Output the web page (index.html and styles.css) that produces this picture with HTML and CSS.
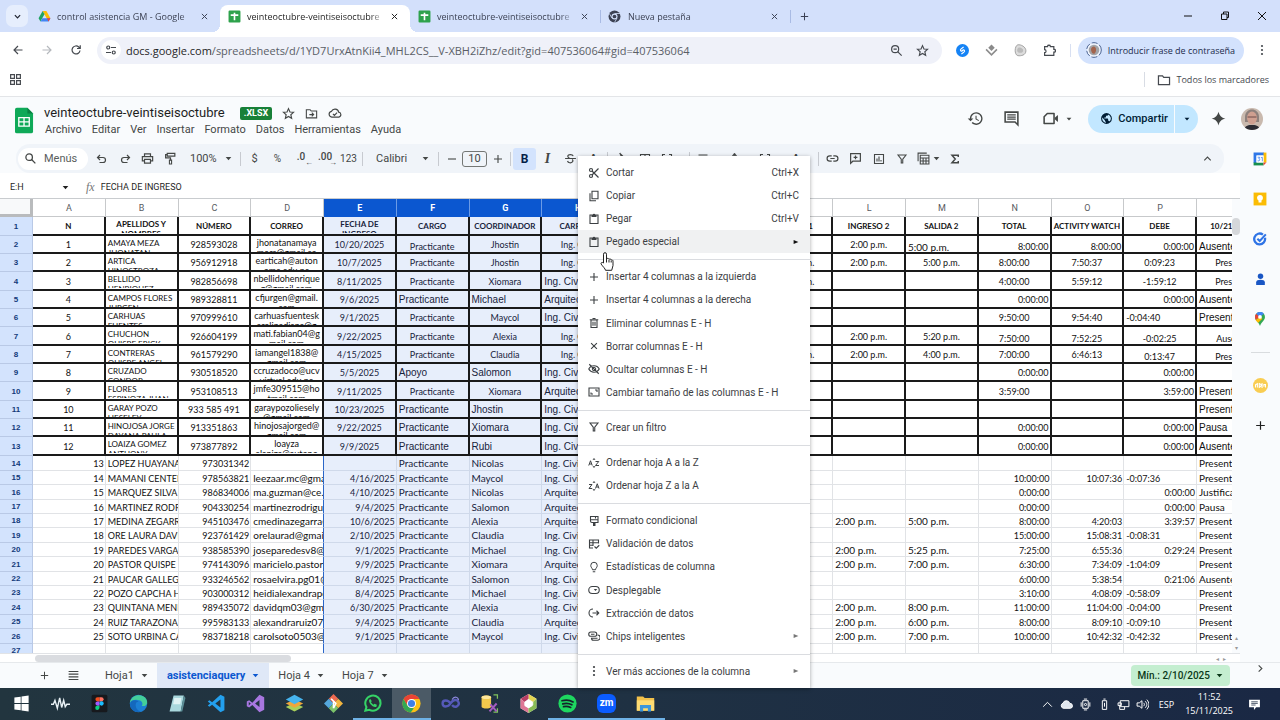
FILE: index.html
```html
<!DOCTYPE html>
<html lang="es">
<head>
<meta charset="utf-8">
<title>veinteoctubre-veintiseisoctubre</title>
<link rel="stylesheet" href="styles.css">
</head>
<body>
<svg class="sprite" aria-hidden="true">
  <symbol id="i-x" viewBox="0 0 24 24"><path d="M5 5l14 14M19 5L5 19" fill="none" stroke="currentColor" stroke-width="2.6"/></symbol>
  <symbol id="i-plus" viewBox="0 0 24 24"><path d="M12 4v16M4 12h16" fill="none" stroke="currentColor" stroke-width="2.2"/></symbol>
  <symbol id="i-minus" viewBox="0 0 24 24"><path d="M4 12h16" fill="none" stroke="currentColor" stroke-width="2.2"/></symbol>
  <symbol id="i-caret" viewBox="0 0 10 10"><path d="M1 3h8L5 7.500z"/></symbol>
  <symbol id="i-play" viewBox="0 0 10 10"><path d="M1 1.500v7L9 5z"/></symbol>
  <symbol id="i-chev" viewBox="0 0 24 24"><path d="M5 8.500l7 7 7-7" fill="none" stroke="currentColor" stroke-width="3.200"/></symbol>
  <symbol id="i-up" viewBox="0 0 24 24"><path d="M5 16l7-7 7 7" fill="none" stroke="currentColor" stroke-width="2.400"/></symbol>
  <symbol id="i-right" viewBox="0 0 24 24"><path d="M8 5l7 7-7 7" fill="none" stroke="currentColor" stroke-width="2.400"/></symbol>
  <symbol id="i-back" viewBox="0 0 24 24"><path d="M21 12H4M12 4l-8 8 8 8" fill="none" stroke="currentColor" stroke-width="2.300"/></symbol>
  <symbol id="i-fwd" viewBox="0 0 24 24"><path d="M3 12h17M12 4l8 8-8 8" fill="none" stroke="currentColor" stroke-width="2.300"/></symbol>
  <symbol id="i-reload" viewBox="0 0 24 24"><path d="M20 13a8 8 0 1 1-2.500-7L20 8.500M20.500 2.500v6.500H14" fill="none" stroke="currentColor" stroke-width="2.400"/></symbol>
  <symbol id="i-tune" viewBox="0 0 24 24"><g fill="none" stroke="currentColor" stroke-width="2.400"><circle cx="6.500" cy="7" r="3"/><path d="M12 7h10M2 17h10"/><circle cx="17.500" cy="17" r="3"/></g></symbol>
  <symbol id="i-search" viewBox="0 0 24 24"><g fill="none" stroke="currentColor" stroke-width="2.400"><circle cx="9.500" cy="9.500" r="6"/><path d="M14 14l7 7"/></g></symbol>
  <symbol id="i-zoomout" viewBox="0 0 24 24"><g fill="none" stroke="currentColor" stroke-width="2.200"><circle cx="9.500" cy="9.500" r="6.500"/><path d="M14 14l7.500 7.500M6.500 9.500h6"/></g></symbol>
  <symbol id="i-star" viewBox="0 0 24 24"><path d="M12 3l2.700 6.200 6.600.6-5 4.500 1.500 6.600L12 17.400l-5.800 3.500 1.500-6.600-5-4.500 6.600-.6z" fill="none" stroke="currentColor" stroke-width="2.100"/></symbol>
  <symbol id="i-puzzle" viewBox="0 0 24 24"><path d="M3 5h5.500V3.500c0-2 5-2 5 0V5H20v5h1.500c2 0 2 5 0 5H20v6H3v-5c3.500 0 3.500-5.500 0-5.500z" fill="none" stroke="currentColor" stroke-width="2.200"/></symbol>
  <symbol id="i-dots" viewBox="0 0 24 24"><circle cx="12" cy="4" r="2.200"/><circle cx="12" cy="12" r="2.200"/><circle cx="12" cy="20" r="2.200"/></symbol>
  <symbol id="i-apps" viewBox="0 0 24 24"><path d="M3 3h7v7H3zM14 3h7v7h-7zM3 14h7v7H3zM14 14h7v7h-7z" fill="none" stroke="currentColor" stroke-width="2.200"/></symbol>
  <symbol id="i-folder" viewBox="0 0 24 24"><path d="M2.500 5h7l2 2.500h10V20h-19z" fill="none" stroke="currentColor" stroke-width="2.100"/></symbol>
  <symbol id="i-foldermove" viewBox="0 0 24 24"><path d="M2.500 5h7l2 2.500h10V20h-19zM8 14h7M12.500 10.500L16 14l-3.500 3.500" fill="none" stroke="currentColor" stroke-width="2"/></symbol>
  <symbol id="i-cloudok" viewBox="0 0 24 24"><path d="M6.500 19a5 5 0 0 1-.5-9.900A6.500 6.500 0 0 1 18.300 10.500 4.300 4.300 0 0 1 18.500 19zM8.500 13.500l2.500 2.500 4.500-4.500" fill="none" stroke="currentColor" stroke-width="2"/></symbol>
  <symbol id="i-sheetfav" viewBox="0 0 24 24"><rect x="1" y="1" width="22" height="22" rx="2" fill="#2ea24c"/><path d="M12 5v14M5 9.500h14" stroke="#fff" stroke-width="3"/></symbol>
  <symbol id="i-drive" viewBox="0 0 24 24"><path d="M8.500 2h7l7.500 13h-7z" fill="#fbbc04"/><path d="M8.500 2L1 15l3.500 6L12 8z" fill="#1ea362"/><path d="M8 15h15l-3.500 6h-15z" fill="#4285f4"/><path d="M19.500 15H23l-3.500 6-3-6z" fill="#ea4335"/></symbol>
  <symbol id="i-chromedark" viewBox="0 0 24 24"><circle cx="12" cy="12" r="11" fill="#3c4254"/><circle cx="12" cy="12" r="5.600" fill="#d3e0fb"/><circle cx="12" cy="12" r="3.400" fill="#3c4254"/><path d="M12 6.500h10M7.300 15L2.500 6.500M16.700 15L12 23" stroke="#d3e0fb" stroke-width="1.500"/></symbol>
  <symbol id="i-history" viewBox="0 0 24 24"><path d="M13 3a9 9 0 0 0-9 9H1l4 4 4-4H6a7 7 0 1 1 2 4.900l-1.400 1.500A9 9 0 1 0 13 3zm-1 5v5l4.300 2.500.7-1.200-3.500-2.100V8z"/></symbol>
  <symbol id="i-comments" viewBox="0 0 24 24"><path d="M3 3h18v18l-4-4H3z" fill="none" stroke="currentColor" stroke-width="2.200"/><path d="M6 7h12M6 10h12M6 13h12" stroke="currentColor" stroke-width="1.700"/></symbol>
  <symbol id="i-cam" viewBox="0 0 24 24"><path d="M7.500 5H17v14H3V9.500z" fill="none" stroke="currentColor" stroke-width="2.200" stroke-linejoin="round"/><path d="M18 11l4.500-4v10L18 13z"/></symbol>
  <symbol id="i-globe" viewBox="0 0 24 24"><path d="M12 2a10 10 0 1 0 0 20 10 10 0 0 0 0-20zm-1 17.900A8 8 0 0 1 4.200 10.200L9 15v1a2 2 0 0 0 2 2zm6.900-2.500A2 2 0 0 0 16 16h-1v-3a1 1 0 0 0-1-1H8v-2h2a1 1 0 0 0 1-1V7h2a2 2 0 0 0 2-2v-.4a8 8 0 0 1 2.900 12.800z"/></symbol>
  <symbol id="i-spark" viewBox="0 0 24 24"><path d="M12 1c1.500 6 4.500 9.500 11 11-6.500 1.500-9.500 5-11 11-1.500-6-4.500-9.500-11-11 6.500-1.500 9.500-5 11-11z"/></symbol>
  <symbol id="i-undo" viewBox="0 0 24 24"><path d="M8 4L3 9l5 5M3 9h11a5 5 0 0 1 0 10H7" fill="none" stroke="currentColor" stroke-width="2.400"/></symbol>
  <symbol id="i-redo" viewBox="0 0 24 24"><path d="M16 4l5 5-5 5M21 9H10a5 5 0 0 0 0 10h7" fill="none" stroke="currentColor" stroke-width="2.400"/></symbol>
  <symbol id="i-print" viewBox="0 0 24 24"><path d="M6.500 8V3.500h11V8M6.500 16.500H2.500V8.500h19v8h-4M6.500 13.500h11v7h-11z" fill="none" stroke="currentColor" stroke-width="2.200"/></symbol>
  <symbol id="i-paint" viewBox="0 0 24 24"><path d="M6 2.500h14v5H6zM6 5H3v6h9v4" fill="none" stroke="currentColor" stroke-width="2.200"/><path d="M10 15h4v7h-4z" fill="none" stroke="currentColor" stroke-width="2"/></symbol>
  <symbol id="i-strike" viewBox="0 0 24 24"><path d="M2 12h20M17 7.500C16 4 7 3.500 7 8c0 1.500 1 2.500 3 3.200M15 14c4 3-1 6.500-4.500 5.800C8 19.500 7 18 6.500 16.500" fill="none" stroke="currentColor" stroke-width="2.200"/></symbol>
  <symbol id="i-fill" viewBox="0 0 24 24"><path d="M8 2l10 10-6.500 6.500L5 12l6-6z" fill="none" stroke="currentColor" stroke-width="2.200"/></symbol>
  <symbol id="i-border" viewBox="0 0 24 24"><path d="M3 3h18v18H3zM12 3v18M3 12h18" fill="none" stroke="currentColor" stroke-width="2.200"/></symbol>
  <symbol id="i-merge" viewBox="0 0 24 24"><path d="M8 3H3v5M16 3h5v5M3 16v5h5M21 16v5h-5M3 12h6M15 12h6" fill="none" stroke="currentColor" stroke-width="2.200"/></symbol>
  <symbol id="i-align" viewBox="0 0 24 24"><path d="M3 4h18M6 9h12M3 14h18M6 19h12" stroke="currentColor" stroke-width="2.200"/></symbol>
  <symbol id="i-valign" viewBox="0 0 24 24"><path d="M12 2l-4 5h8zM12 7v4M3 12h18M12 22l-4-5h8z" stroke="currentColor"/></symbol>
  <symbol id="i-link" viewBox="0 0 24 24"><path d="M10.500 17H7A5 5 0 0 1 7 7h3.500M13.500 7H17a5 5 0 0 1 0 10h-3.500M8 12h8" fill="none" stroke="currentColor" stroke-width="2.200"/></symbol>
  <symbol id="i-addcom" viewBox="0 0 24 24"><path d="M3 3h18v14H7l-4 4zM12 6.500v7M8.500 10h7" fill="none" stroke="currentColor" stroke-width="2.200"/></symbol>
  <symbol id="i-chart" viewBox="0 0 24 24"><path d="M3 3h18v18H3zM8 17v-6M12 17V7M16 17v-3" fill="none" stroke="currentColor" stroke-width="2.200"/></symbol>
  <symbol id="i-filter" viewBox="0 0 24 24"><path d="M4 4h16l-6.500 8.500V20h-3v-7.500z" fill="none" stroke="currentColor" stroke-width="2.200"/></symbol>
  <symbol id="i-views" viewBox="0 0 24 24"><path d="M2 17V2h16M6 6h16v16H6zM6 11h16M6 16.500h16M11.300 11v11M16.600 11v11" fill="none" stroke="currentColor" stroke-width="2"/></symbol>
  <symbol id="i-sigma" viewBox="0 0 24 24"><path d="M18.500 8V4.500H6l6.500 7.500L6 19.500h12.500V16" fill="none" stroke="currentColor" stroke-width="3"/></symbol>
  <symbol id="i-cut" viewBox="0 0 24 24"><g fill="none" stroke="currentColor" stroke-width="2.400"><circle cx="6" cy="6" r="3"/><circle cx="6" cy="18" r="3"/><path d="M8 8l13 13M8 16L21 3"/></g></symbol>
  <symbol id="i-copy" viewBox="0 0 24 24"><path d="M8 2.500h12v15H8zM4 6.500v15h12" fill="none" stroke="currentColor" stroke-width="2.200"/></symbol>
  <symbol id="i-paste" viewBox="0 0 24 24"><path d="M4 4h16v17H4z" fill="none" stroke="currentColor" stroke-width="2.200"/><path d="M7 4h2.500a2.500 2.500 0 0 1 5 0H17v4H7z"/></symbol>
  <symbol id="i-trash" viewBox="0 0 24 24"><path d="M6 6h12v15H6zM3.500 5.500h17M9 3h6M10 9.500v8M14 9.500v8" fill="none" stroke="currentColor" stroke-width="2.200"/></symbol>
  <symbol id="i-hide" viewBox="0 0 24 24"><path d="M1.500 12C6 3.500 18 3.500 22.500 12 18 20.500 6 20.500 1.500 12zM2.500 2.500l19 19" fill="none" stroke="currentColor" stroke-width="2.200"/><circle cx="12" cy="12" r="3.500" fill="none" stroke="currentColor" stroke-width="2"/></symbol>
  <symbol id="i-resize" viewBox="0 0 24 24"><path d="M2 4h20v16H2zM14 8h4v4M6 13v3h4" fill="none" stroke="currentColor" stroke-width="2.200"/></symbol>
  <symbol id="i-az" viewBox="0 0 24 24"><path d="M1.500 17L5 7.500 8.500 17M3 14h4M15 9h6.500L15 17h7" fill="none" stroke="currentColor" stroke-width="2"/><path d="M12 2l3 3.500H9zM12 22l3-3.500H9z"/></symbol>
  <symbol id="i-za" viewBox="0 0 24 24"><path d="M2 9h6l-6 8h6.500M15 17l3.500-9.500L22 17M16.500 14h4" fill="none" stroke="currentColor" stroke-width="2"/><path d="M12 2l3 3.500H9zM12 22l3-3.500H9z"/></symbol>
  <symbol id="i-brush" viewBox="0 0 24 24"><path d="M5 3h15v12H8a3 3 0 0 1-3-3zM5 9.500h15M15 3v4" fill="none" stroke="currentColor" stroke-width="2.200"/><path d="M10 14h5v8h-5z"/></symbol>
  <symbol id="i-valid" viewBox="0 0 24 24"><path d="M10 20H3V4h18v7M3 9.500h18M3 14.500h8M10 4v12M13 17l3.500 3.500 6-6" fill="none" stroke="currentColor" stroke-width="2.200"/></symbol>
  <symbol id="i-bulb" viewBox="0 0 24 24"><path d="M9 17.500c0-3-3.500-4.500-3.500-8.500a6.500 6.500 0 0 1 13 0c0 4-3.500 5.500-3.500 8.500zM9.500 21.500h5" fill="none" stroke="currentColor" stroke-width="2"/></symbol>
  <symbol id="i-drop" viewBox="0 0 24 24"><rect x="1.500" y="5" width="21" height="14" rx="7" fill="none" stroke="currentColor" stroke-width="2.200"/><path d="M11.500 10h7L15 14z"/></symbol>
  <symbol id="i-extract" viewBox="0 0 24 24"><path d="M10 4a8 8 0 0 0 0 16M9 12h12M17 7.500l4.500 4.500-4.500 4.500" fill="none" stroke="currentColor" stroke-width="2.200"/></symbol>
  <symbol id="i-chips" viewBox="0 0 24 24"><rect x="1.500" y="4" width="16" height="8.500" rx="4.200" fill="none" stroke="currentColor" stroke-width="2.200"/><path d="M19 10a4.500 4.500 0 0 1 0 10.500H11a4 4 0 0 1-4-4h12M6 8.500h7" fill="none" stroke="currentColor" stroke-width="2.200"/></symbol>
  <symbol id="i-list" viewBox="0 0 24 24"><path d="M3 4.500h18M3 9.500h18M3 14.500h18M3 19.500h18" stroke="currentColor" stroke-width="2"/></symbol>
</svg>

<div class="screen">
  <header class="tabstrip">
    <button class="tab-search" aria-label="Buscar pestañas"><svg class="s9"><use href="#i-chev"/></svg></button>
    <nav class="tabs">
      <div class="tab"><svg class="s13"><use href="#i-drive"/></svg><span>control asistencia GM - Google</span><button aria-label="Cerrar"><svg class="s9"><use href="#i-x"/></svg></button></div>
      <div class="tab active"><svg class="s13"><use href="#i-sheetfav"/></svg><span>veinteoctubre-veintiseisoctubre</span><button aria-label="Cerrar"><svg class="s9"><use href="#i-x"/></svg></button></div>
      <div class="tab"><svg class="s13"><use href="#i-sheetfav"/></svg><span>veinteoctubre-veintiseisoctubre</span><button aria-label="Cerrar"><svg class="s9"><use href="#i-x"/></svg></button></div>
      <div class="tab ruled"><svg class="s13"><use href="#i-chromedark"/></svg><span>Nueva pestaña</span><button aria-label="Cerrar"><svg class="s9"><use href="#i-x"/></svg></button></div>
      <button class="newtab" aria-label="Nueva pestaña"><svg class="s11"><use href="#i-plus"/></svg></button>
    </nav>
    <div class="winctl">
      <button aria-label="Minimizar"><svg viewBox="0 0 10 10"><path d="M1 5h8"/></svg></button>
      <button aria-label="Restaurar"><svg viewBox="0 0 10 10"><path d="M1.500 3h5.500v5.500H1.500zM3.500 3V1h5v5.500H7"/></svg></button>
      <button aria-label="Cerrar"><svg viewBox="0 0 10 10"><path d="M1 1l8 8M9 1L1 9"/></svg></button>
    </div>
  </header>

  <div class="chromebar">
    <button class="nav" aria-label="Atrás"><svg class="s12"><use href="#i-back"/></svg></button>
    <button class="nav dim" aria-label="Adelante"><svg class="s12"><use href="#i-fwd"/></svg></button>
    <button class="nav" aria-label="Recargar"><svg class="s12"><use href="#i-reload"/></svg></button>
    <div class="omnibox">
      <button class="site" aria-label="Información del sitio"><svg class="s12"><use href="#i-tune"/></svg></button>
      <a class="url" href="#"><b>docs.google.com</b>/spreadsheets/d/1YD7UrxAtnKii4_MHL2CS__V-XBH2iZhz/edit?gid=407536064#gid=407536064</a>
      <button aria-label="Zoom"><svg class="s13"><use href="#i-zoomout"/></svg></button>
      <button aria-label="Favorito"><svg class="s13"><use href="#i-star"/></svg></button>
    </div>
    <div class="exts">
      <button aria-label="Shazam"><svg class="s13" viewBox="0 0 24 24"><circle cx="12" cy="12" r="12" fill="#1583f5"/><path d="M14 5.500l-4.500 3.500c-3 2.500 0 5.500 2 3.500l1-1M10 18.500l4.500-3.500c3-2.500 0-5.500-2-3.500l-1 1" fill="none" stroke="#fff" stroke-width="2.200"/></svg></button>
      <button aria-label="Extensión"><svg class="s13" viewBox="0 0 24 24"><path d="M12 1l6 6-6 6-6-6z" fill="#8a8a8a"/><path d="M2 10l10 10 10-10" fill="none" stroke="#8d8d8d" stroke-width="3"/></svg></button>
      <button aria-label="Extensión"><svg class="s13" viewBox="0 0 24 24"><path d="M7 1.500c6-1 15 4 15 11 0 8-9 10-15 9-7-2-6-18 0-20z" fill="#dcdcdc" stroke="#999" stroke-width="1.600"/><path d="M8 7c3-2 9 1 9 5s-4 5-8 4-4-7-1-9z" fill="#bbb"/></svg></button>
      <button aria-label="Extensiones"><svg class="s13"><use href="#i-puzzle"/></svg></button>
    </div>
    <button class="profile"><svg class="s16" viewBox="0 0 24 24"><circle cx="12" cy="12" r="11" fill="#eef3fd" stroke="#4c6594" stroke-width="1.500" stroke-dasharray="9 3"/><circle cx="12" cy="12" r="8" fill="#a2a4a8"/><path d="M9 8c3-3 7 0 6 5s-4 6-6 3-2-6 0-8z" fill="#a3644d"/></svg>Introducir frase de contraseña</button>
    <button class="kebab" aria-label="Menú"><svg class="s12"><use href="#i-dots"/></svg></button>
  </div>

  <div class="bookmarks">
    <button aria-label="Aplicaciones"><svg class="s13"><use href="#i-apps"/></svg></button>
    <button class="allmarks"><svg class="s14"><use href="#i-folder"/></svg>Todos los marcadores</button>
  </div>

  <main class="docs">
    <div class="dochead">
      <svg class="logo" viewBox="0 0 20 27"><path d="M2 0h11l6 6v19a2 2 0 0 1-2 2H2a2 2 0 0 1-2-2V2a2 2 0 0 1 2-2z" fill="#0fa958"/><path d="M13 0l6 6h-6z" fill="#0a8043"/><path d="M4 10.500h11v9H4zM4 15h11M9.500 10.500v9" fill="none" stroke="#fff" stroke-width="1.400"/></svg>
      <div class="titles">
        <div class="titlerow"><h1>veinteoctubre-veintiseisoctubre</h1><span class="badge">.XLSX</span><button aria-label="Destacar"><svg class="s13"><use href="#i-star"/></svg></button><button aria-label="Mover"><svg class="s13"><use href="#i-foldermove"/></svg></button><button aria-label="Estado"><svg class="s14"><use href="#i-cloudok"/></svg></button></div>
        <nav class="menubar"><button>Archivo</button><button>Editar</button><button>Ver</button><button>Insertar</button><button>Formato</button><button>Datos</button><button>Herramientas</button><button>Ayuda</button></nav>
      </div>
      <div class="headtools">
        <button class="hbtn" aria-label="Historial"><svg class="s17"><use href="#i-history"/></svg></button>
        <button class="hbtn" aria-label="Comentarios"><svg class="s17"><use href="#i-comments"/></svg></button>
        <button class="hbtn cam" aria-label="Reunión"><svg class="s17"><use href="#i-cam"/></svg><svg class="s6"><use href="#i-caret"/></svg></button>
        <div class="share"><button><svg class="s13"><use href="#i-globe"/></svg>Compartir</button><button class="more" aria-label="Más opciones"><svg class="s6"><use href="#i-caret"/></svg></button></div>
        <button class="spark" aria-label="Gemini"><svg class="s15"><use href="#i-spark"/></svg></button>
        <svg class="avatar" viewBox="0 0 22 22"><defs><clipPath id="av"><circle cx="11" cy="11" r="11"/></clipPath></defs><g clip-path="url(#av)"><rect width="22" height="22" fill="#c9b9ae"/><path d="M4 9c0-10 14-10 14 0v5H4z" fill="#8d807c"/><ellipse cx="11" cy="10" rx="5" ry="6.500" fill="#cf9f90"/><path d="M6.500 9h9" stroke="#6a4b48"/><path d="M3 22c1-5 5-5 8-5s7 0 8 5z" fill="#2c2b33"/></g></svg>
      </div>
    </div>

    <div class="workspace">
      <div class="editor">
        <div class="toolbar">
          <label class="menus"><svg class="s13"><use href="#i-search"/></svg><input type="text" placeholder="Menús" aria-label="Menús"></label>
          <button class="tb" aria-label="Deshacer"><svg class="s12"><use href="#i-undo"/></svg></button>
          <button class="tb" aria-label="Rehacer"><svg class="s12"><use href="#i-redo"/></svg></button>
          <button class="tb" aria-label="Imprimir"><svg class="s13"><use href="#i-print"/></svg></button>
          <button class="tb" aria-label="Copiar formato"><svg class="s13"><use href="#i-paint"/></svg></button>
          <button class="tb combo zoom">100%<svg class="s7"><use href="#i-caret"/></svg></button>
          <i class="rule"></i>
          <button class="tb">$</button><button class="tb sm">%</button>
          <button class="tb dec"><span>.0</span><small>←</small></button><button class="tb dec"><span>.00</span><small>→</small></button><button class="tb sm">123</button>
          <i class="rule"></i>
          <button class="tb combo font">Calibri<svg class="s7"><use href="#i-caret"/></svg></button>
          <i class="rule"></i>
          <button class="tb step" aria-label="Reducir"><svg class="s12"><use href="#i-minus"/></svg></button>
          <input class="size" type="text" value="10" aria-label="Tamaño">
          <button class="tb step" aria-label="Aumentar"><svg class="s12"><use href="#i-plus"/></svg></button>
          <i class="rule"></i>
          <button class="tb on"><b>B</b></button><button class="tb ital"><em>I</em></button>
          <button class="tb" aria-label="Tachado"><svg class="s13"><use href="#i-strike"/></svg></button>
          <button class="tb"><b>A</b></button>
          <i class="rule"></i>
          <button class="tb" aria-label="Relleno"><svg class="s14"><use href="#i-fill"/></svg></button>
          <button class="tb" aria-label="Bordes"><svg class="s12"><use href="#i-border"/></svg></button>
          <button class="tb wide" aria-label="Combinar"><svg class="s12"><use href="#i-merge"/></svg><svg class="s6"><use href="#i-caret"/></svg></button>
          <i class="rule"></i>
          <button class="tb wide" aria-label="Alinear"><svg class="s12"><use href="#i-align"/></svg><svg class="s6"><use href="#i-caret"/></svg></button>
          <button class="tb wide" aria-label="Alineación vertical"><svg class="s13"><use href="#i-valign"/></svg><svg class="s6"><use href="#i-caret"/></svg></button>
          <button class="tb wide" aria-label="Ajuste"><svg class="s12"><use href="#i-merge"/></svg><svg class="s6"><use href="#i-caret"/></svg></button>
          <button class="tb wide"><b>A</b><svg class="s6"><use href="#i-caret"/></svg></button>
          <i class="rule"></i>
          <button class="tb" aria-label="Enlace"><svg class="s13"><use href="#i-link"/></svg></button>
          <button class="tb" aria-label="Comentario"><svg class="s13"><use href="#i-addcom"/></svg></button>
          <button class="tb" aria-label="Gráfico"><svg class="s12"><use href="#i-chart"/></svg></button>
          <button class="tb" aria-label="Filtro"><svg class="s12"><use href="#i-filter"/></svg></button>
          <button class="tb wide" aria-label="Vistas"><svg class="s13"><use href="#i-views"/></svg><svg class="s7"><use href="#i-caret"/></svg></button>
          <button class="tb step" aria-label="Funciones"><svg class="s12"><use href="#i-sigma"/></svg></button>
          <button class="tb collapse" aria-label="Ocultar menús"><svg class="s11"><use href="#i-up"/></svg></button>
        </div>
        <div class="formula">
          <button class="namebox">E:H<svg class="s7"><use href="#i-caret"/></svg></button>
          <em class="fx">fx</em>
          <input type="text" value="FECHA DE INGRESO" aria-label="Fórmula">
        </div>
        <div class="gridwrap">
          <div class="gridview"><table class="grid" id="grid"></table></div>
          <div class="vscroll"><i></i><span>▴</span><span>▾</span></div>
        </div>
        <div class="hscroll"><i></i><span>◂</span><span>▸</span></div>
      </div>
      <aside class="side">
        <button aria-label="Calendar"><svg class="s14" viewBox="0 0 24 24"><path d="M1 1h18v5H6v13H1z" fill="#2f77e8"/><path d="M18 1h5v17h-5z" fill="#fbbc04"/><path d="M1 18h17v5H1z" fill="#188f4d"/><path d="M18 18h5l-5 5z" fill="#ea4335"/><path d="M6 6h12v12H6z" fill="#fff"/><path d="M8 9h3.500l-1.500 3c3 0 2 4-2 3M13.500 10L16 9v7" fill="none" stroke="#4285f4" stroke-width="1.400"/></svg></button>
        <button aria-label="Keep"><svg class="s14" viewBox="0 0 24 24"><path d="M1 1h22v22H1z" fill="#fbbc04"/><circle cx="12" cy="10" r="5" fill="#fff"/><path d="M9.500 14h5v4h-5z" fill="#fff"/></svg></button>
        <button aria-label="Tasks"><svg class="s14" viewBox="0 0 24 24"><path d="M20.500 10A9.300 9.300 0 1 1 17 4.500" fill="none" stroke="#2f74e6" stroke-width="4"/><path d="M7.500 11.500l4 4L22 4" fill="none" stroke="#2f74e6" stroke-width="3.500"/></svg></button>
        <button aria-label="Contactos"><svg class="s13" viewBox="0 0 24 24"><circle cx="12" cy="6" r="5" fill="#1a56c4"/><path d="M4 22v-5c0-6 16-6 16 0v5z" fill="#1a56c4"/></svg></button>
        <button aria-label="Maps"><svg class="s14" viewBox="0 0 24 24"><path d="M12 0a8.500 8.500 0 0 0-8.500 8.500c0 6 6 8 8.500 15.500 2.500-7.500 8.500-9.500 8.500-15.500A8.500 8.500 0 0 0 12 0z" fill="#34a853"/><path d="M5.500 3L12 8.500 4.500 13.500C3 9 3 6 5.500 3z" fill="#ea4335"/><path d="M4.500 13.500L12 8.500l4 3-7 7c-1.500-2-3.500-3-4.500-5z" fill="#fbbc04"/><path d="M5.500 3C9-1.500 16-1 18.500 3L12 8.500z" fill="#4285f4"/><circle cx="12" cy="8.500" r="3.200" fill="#fff"/></svg></button>
        <i class="siderule"></i>
        <button aria-label="Complemento"><svg class="s15" viewBox="0 0 24 24"><circle cx="12" cy="12" r="12" fill="#f9cd52"/><path d="M4 15v-4l3-2v6M10 8v8M10 10c4-2 4 5 0 4M14.500 8v8M17.500 14v-3.500h2.500V15" fill="none" stroke="#fff" stroke-width="1.700"/></svg></button>
        <button aria-label="Añadir"><svg class="s13"><use href="#i-plus"/></svg></button>
        <button class="sidelast" aria-label="Ocultar panel"><svg class="s11"><use href="#i-right"/></svg></button>
      </aside>
    </div>

    <footer class="sheetbar">
      <button class="sq" aria-label="Añadir hoja"><svg class="s11"><use href="#i-plus"/></svg></button>
      <button class="sq" aria-label="Todas las hojas"><svg class="s13"><use href="#i-list"/></svg></button>
      <div class="sheets">
        <button>Hoja1<svg class="s7"><use href="#i-caret"/></svg></button>
        <button class="current">asistenciaquery<svg class="s7"><use href="#i-caret"/></svg></button>
        <button>Hoja 4<svg class="s7"><use href="#i-caret"/></svg></button>
        <button>Hoja 7<svg class="s7"><use href="#i-caret"/></svg></button>
      </div>
      <button class="calc">Mín.: 2/10/2025<svg class="s7"><use href="#i-caret"/></svg></button>
    </footer>
  </main>

  <div class="ctx" role="menu">
    <button><svg class="s12"><use href="#i-cut"/></svg>Cortar<kbd>Ctrl+X</kbd></button>
    <button><svg class="s12"><use href="#i-copy"/></svg>Copiar<kbd>Ctrl+C</kbd></button>
    <button><svg class="s12"><use href="#i-paste"/></svg>Pegar<kbd>Ctrl+V</kbd></button>
    <button class="hover"><svg class="s12"><use href="#i-paste"/></svg>Pegado especial<svg class="arrow dark"><use href="#i-play"/></svg></button>
    <hr>
    <button><svg class="s12"><use href="#i-plus"/></svg>Insertar 4 columnas a la izquierda</button>
    <button><svg class="s12"><use href="#i-plus"/></svg>Insertar 4 columnas a la derecha</button>
    <button><svg class="s12"><use href="#i-trash"/></svg>Eliminar columnas E - H</button>
    <button><svg class="s12 small"><use href="#i-x"/></svg>Borrar columnas E - H</button>
    <button><svg class="s12"><use href="#i-hide"/></svg>Ocultar columnas E - H</button>
    <button><svg class="s12"><use href="#i-resize"/></svg>Cambiar tamaño de las columnas E - H</button>
    <hr>
    <button><svg class="s12"><use href="#i-filter"/></svg>Crear un filtro</button>
    <hr>
    <button><svg class="s12"><use href="#i-az"/></svg>Ordenar hoja A a la Z</button>
    <button><svg class="s12"><use href="#i-za"/></svg>Ordenar hoja Z a la A</button>
    <hr>
    <button><svg class="s12"><use href="#i-brush"/></svg>Formato condicional</button>
    <button><svg class="s12"><use href="#i-valid"/></svg>Validación de datos</button>
    <button><svg class="s12"><use href="#i-bulb"/></svg>Estadísticas de columna</button>
    <button><svg class="s12"><use href="#i-drop"/></svg>Desplegable</button>
    <button><svg class="s12"><use href="#i-extract"/></svg>Extracción de datos</button>
    <button><svg class="s12"><use href="#i-chips"/></svg>Chips inteligentes<svg class="arrow"><use href="#i-play"/></svg></button>
    <hr>
    <button><svg class="s12"><use href="#i-dots"/></svg>Ver más acciones de la columna<svg class="arrow"><use href="#i-play"/></svg></button>
  </div>
  <svg class="pointer" viewBox="0 0 14 19"><path d="M3.500 11V2.200a1.500 1.500 0 0 1 3 0V7c.5-1 2.300-.8 2.500.4.600-.8 2-.5 2.200.6.800-.4 1.800 0 1.800 1.200v4.300c0 2-1.300 3-1.300 4.800H5.500c0-1.500-3-4-4.300-6.200C.5 10.800 2 9.800 3.500 11z" fill="#fff" stroke="#222"/><path d="M6.500 7v3.500M9 8v2.500M11.200 8.500v2" stroke="#222" fill="none"/></svg>

  <footer class="taskbar">
    <div class="apps">
      <button aria-label="Inicio"><svg viewBox="0 0 24 24"><path d="M3 4.500l8-1v8H3zM12 3.300l9-1.300v9.500h-9zM3 12.500h8v8l-8-1zM12 12.500h9V22l-9-1.300z" fill="#fff"/></svg></button>
      <button aria-label="Ondas"><svg viewBox="0 0 24 24"><path d="M0 13h3l2-5 3 10 3-13 2.500 12L16 8l2 8 2-3h4" fill="none" stroke="#e8f0f4" stroke-width="1.800"/></svg></button>
      <button aria-label="Figma"><svg viewBox="0 0 24 24"><rect x="2" y="1" width="20" height="22" rx="2" fill="#17191d"/><path d="M12 4H9.500a2.700 2.700 0 0 0 0 5.400H12z" fill="#f24e1e"/><path d="M12 4h2.500a2.700 2.700 0 0 1 0 5.400H12z" fill="#ff7262"/><path d="M12 9.400H9.500a2.700 2.700 0 0 0 0 5.400H12z" fill="#a259ff"/><circle cx="14.600" cy="12" r="2.700" fill="#1abcfe"/><path d="M12 14.800H9.500a2.700 2.700 0 1 0 2.500 2.700z" fill="#0acf83"/></svg></button>
      <button aria-label="Edge"><svg viewBox="0 0 24 24"><circle cx="12" cy="12" r="11" fill="#1c7fd4"/><path d="M1 11C3-2 22-1 23 10c0 4-3 6-7 5 2-2 1-6-3-7C8 6 3 8 1 11z" fill="#44cf9a"/><path d="M9 11c-2 5 1 10 6 11.500C5 25-2 15 3 9c3-2 8-1 9 1-1 0-2 0-3 1z" fill="#1468bd"/></svg></button>
      <button aria-label="Bloc de notas"><svg viewBox="0 0 24 24"><path d="M7 2h13l-4 20H2z" fill="#a9d8dd"/><path d="M20 2l2 3-4 17h-2z" fill="#5d9199"/><path d="M8 5h9l-1.500 8h-9z" fill="#dff3f4"/></svg></button>
      <button aria-label="Visual Studio Code"><svg viewBox="0 0 24 24"><path d="M17 1l5 2.500v17L17 23 6.500 13.500 3 16l-2-1.500L4 12 1 9.500 3 8l3.500 2.500zM17 7l-6.500 5 6.500 5z" fill="#23a0ee"/></svg></button>
      <button aria-label="Visual Studio"><svg viewBox="0 0 24 24"><path d="M17 1l6 3v16l-6 3-9-9-4 3-3-1.500V9.500L4 8l4 3zM17 7.500L11.500 12l5.500 4.500zM3.500 10v4.500L6 12z" fill="#a877e0" fill-rule="evenodd"/></svg></button>
      <button aria-label="BlueStacks"><svg viewBox="0 0 24 24"><path d="M12 11l11 5.500L12 22 1 16.500z" fill="#a9d05a"/><path d="M12 7l11 5-11 5.500L1 12z" fill="#f0a63b"/><path d="M12 1l11 6-11 6L1 7z" fill="#46b4ee"/></svg></button>
      <button aria-label="Git"><svg viewBox="0 0 24 24"><path d="M12 0l6 6-6 6-6-6z" fill="#ef6b51"/><path d="M18 6l6 6-6 6-6-6z" fill="#f1b53f"/><path d="M6 6l6 6-6 6-6-6z" fill="#55a8dc"/><path d="M12 12l6 6-6 6-6-6z" fill="#7bc36a"/><path d="M9 6l6 6-3 6M12 9v9" stroke="#fff" stroke-width="2" fill="none"/></svg></button>
      <button class="run" aria-label="WhatsApp"><svg viewBox="0 0 24 24"><path d="M3 21l1.300-4.500A9.600 9.600 0 1 1 8 20z" fill="#27313a" stroke="#35d367" stroke-width="2.600"/><path d="M8 7c-2 4 5 11 9 9l.5-2.500-3-1.200-1.500 1.200-3-3L11 9 9.800 6.500z" fill="#35d367"/></svg></button>
      <button class="run front" aria-label="Chrome"><svg viewBox="0 0 24 24"><circle cx="12" cy="12" r="11.500" fill="#fbc116"/><path d="M12 .5a11.500 11.500 0 0 1 10 5.800H12l-5 8.500L2 6.300A11.500 11.500 0 0 1 12 .5z" fill="#e94335"/><path d="M2 6.300l5 8.600 5 2.800 3 .3-4 5.500A11.500 11.500 0 0 1 2 6.300z" fill="#34a853"/><circle cx="12" cy="12" r="5.700" fill="#fff"/><circle cx="12" cy="12" r="4.500" fill="#3d7fe8"/></svg></button>
      <button aria-label="Servicio"><svg viewBox="0 0 24 24"><path d="M12 12c-3-5-10-5-10 0s7 5 10 0 8-6 10-2-4 9-8 4" fill="none" stroke="#5559b8" stroke-width="3"/><path d="M14 7c3-5 8-3 8 1" fill="none" stroke="#8f8ae0" stroke-width="1.500"/></svg></button>
      <button aria-label="Base de datos"><svg viewBox="0 0 24 24"><path d="M2 4c0-3 12-3 12 0v12c0 3-12 3-12 0z" fill="#f2c94c"/><ellipse cx="8" cy="4" rx="6" ry="2.200" fill="#ffe79b"/><path d="M17 1h5v5M22 18v5h-5" stroke="#7fc15c" stroke-width="1.600" fill="none"/><path d="M12 22l9-10M13 13l8 9" stroke="#a35cc0" stroke-width="2.500"/></svg></button>
      <button aria-label="Cubo"><svg viewBox="0 0 24 24"><path d="M12 0l10 6v12l-10 6L2 18V6z" fill="#f0f1ee"/><path d="M12 0l10 6-4 4-6-4z" fill="#e3d552"/><path d="M2 6l10-6v6l-5 4z" fill="#b63d63"/><path d="M2 6v12l10 6v-6l-5-4v-4z" fill="#de7695"/><path d="M22 6v12l-10 6v-6l6-4v-4z" fill="#88bb55"/><path d="M12 7l5 3v5l-5 3-5-3v-5z" fill="#fff"/></svg></button>
      <button class="run" aria-label="Spotify"><svg viewBox="0 0 24 24"><circle cx="12" cy="12" r="11.500" fill="#1ed760"/><path d="M5 8.500c5-1.500 10-1 14 1.500M6 12.500c4-1.200 8-.8 11.500 1.200M7 16c3.500-1 6-.6 9 1" fill="none" stroke="#15232b" stroke-width="2.200" stroke-linecap="round"/></svg></button>
      <button class="run zoomapp" aria-label="Zoom"><span>zm</span></button>
      <button class="run" aria-label="Explorador"><svg viewBox="0 0 24 24"><path d="M1 3h8l2 2h12v16H1z" fill="#f3c14b"/><path d="M1 8h22v13H1z" fill="#ffdc73"/><path d="M5 14h14v8h-4v-4H9v4H5z" fill="#3d97dc"/></svg></button>
    </div>
    <div class="tray">
      <button aria-label="Mostrar iconos"><svg viewBox="0 0 24 24"><path d="M4 16l8-8 8 8"/></svg></button>
      <button aria-label="OneDrive"><svg viewBox="0 0 24 24"><path d="M6 19a5 5 0 0 1-.5-9.500A6.500 6.500 0 0 1 18 10a4.500 4.500 0 0 1 1 9z" fill="#dfe6ee"/></svg></button>
      <button aria-label="Meet"><svg viewBox="0 0 24 24"><path d="M7 5h10v14H7zM9 2h6M9 22h6M4 8v8M20 8v8"/><circle cx="12" cy="12" r="2"/></svg></button>
      <button aria-label="Batería"><svg viewBox="0 0 24 24"><path d="M8 5h8v16H8zM10 2h4M12 9v7"/></svg></button>
      <button aria-label="Red"><svg viewBox="0 0 24 24"><path d="M6 5h16v11H6zM2 9h6v5H2zM5 14v7h9v-5"/></svg></button>
      <button aria-label="Volumen"><svg viewBox="0 0 24 24"><path d="M2 9v6h4l5 4V5L6 9zM14 9c2 2 2 4 0 6M17 6c4 4 4 8 0 12M20 3c5 6 5 12 0 18"/></svg></button>
      <span class="lang">ESP</span>
      <time><span>11:52</span><span>15/11/2025</span></time>
      <button class="notes" aria-label="Notificaciones"><svg viewBox="0 0 24 24"><path d="M2 3h20v14h-7l-4 5v-5H2z" fill="#fff"/><path d="M6 7h12M6 10h12M6 13h8" stroke="#1c2a44" stroke-width="1.400"/></svg></button>
    </div>
  </footer>
</div>
<script src="grid.js"></script>
</body>
</html>
```
FILE: grid.js
```js
// Cell notation: "<style> <text>"; c/l/r align the cell text, L uses Arial,
// "_" sits on the bottom edge, "w" wraps onto two lines separated by "~".
var H = ["w APELLIDOS Y~NOMBRES", "w FECHA DE~INGRESO"];
var rows = [
  ["c N", H[0], "c NÚMERO", "c CORREO", H[1], "c CARGO", "c COORDINADOR", "c CARRERA", "", "c INGRESO 1", "c SALIDA 1", "c INGRESO 2", "c SALIDA 2", "c TOTAL", "c ACTIVITY WATCH", "c DEBE", "c 10/21/2025"],
  ["c 1", "wl AMAYA MEZA~JHONATAN", "c 928593028", "w jhonatanamaya~mora@gmail.co", "c 10/20/2025", "c_ Practicante", "c Jhostin", "c Ing. Civil", "", "", "", "c 2:00 p.m.", "t_ 5:00 p.m.", "r_ 8:00:00", "r_ 8:00:00", "r_ 0:00:00", "L_ Ausente"],
  ["c 2", "wl ARTICA~HINOSTROZA", "c 956912918", "w earticah@auton~oma.edu.pe", "c 10/7/2025", "c Practicante", "c Jhostin", "c Ing. Civil", "", "", "c 1:00 p.m.", "c 2:00 p.m.", "c 5:00 p.m.", "c 8:00:00", "c 7:50:37", "c 0:09:23", "c Presente"],
  ["c 3", "wl BELLIDO~HENRIQUEZ", "c 982856698", "w nbellidohenrique~z@gmail.com", "c 8/11/2025", "c Practicante", "c Xiomara", "L Ing. Civil", "", "", "c 1:00 p.m.", "", "", "c 4:00:00", "c 5:59:12", "c -1:59:12", "c Presente"],
  ["c 4", "wl CAMPOS FLORES~JURGEN", "c 989328811", "w cfjurgen@gmail.~com", "c 9/6/2025", "L Practicante", "L Michael", "L Arquitectura", "", "", "", "", "", "r 0:00:00", "", "r 0:00:00", "L Ausente"],
  ["c 5", "wl CARHUAS~FUENTES", "c 970999610", "w carhuasfuentesk~arolinadiana@g", "c 9/1/2025", "c Practicante", "c Maycol", "L Ing. Civil", "", "", "", "", "", "c 9:50:00", "c 9:54:40", "l -0:04:40", "L Presente"],
  ["c 6", "wl CHUCHON~QUISPE ERICK", "c 926604199", "w mati.fabian04@g~mail.com", "c 9/22/2025", "c Practicante", "c Alexia", "c Ing. Civil", "", "", "", "c 2:00 p.m.", "c 5:20 p.m.", "c_ 7:50:00", "c_ 7:52:25", "c_ -0:02:25", "c_ Ausente"],
  ["c 7", "wl CONTRERAS~QUISPE ANGEL", "c 961579290", "w iamangel1838@~gmail.com", "c 4/15/2025", "c Practicante", "c Claudia", "c Ing. Civil", "", "", "c 1:00 p.m.", "c 2:00 p.m.", "c 4:00 p.m.", "c 7:00:00", "c 6:46:13", "c_ 0:13:47", "c_ Presente"],
  ["c 8", "wl CRUZADO~CONDOR", "c 930518520", "w ccruzadoco@ucv~virtual.edu.pe", "c 5/5/2025", "L Apoyo", "L Salomon", "L Ing. Civil", "", "", "", "", "", "r 0:00:00", "", "r 0:00:00", ""],
  ["c 9", "wl FLORES~ESPINOZA JUAN", "c 953108513", "w jmfe309515@ho~tmail.com", "c 9/11/2025", "c Practicante", "c Xiomara", "L Arquitectura", "", "", "", "", "", "c 3:59:00", "", "r 3:59:00", "L Presente"],
  ["c 10", "wl GARAY POZO~LIESELEY", "c 933 585 491", "w garaypozoliesely~@gmail.com", "c 10/23/2025", "L Practicante", "L Jhostin", "L Ing. Civil", "", "", "", "", "", "", "", "", "L Presente"],
  ["c 11", "wl HINOJOSA JORGE~DAYANA PAULA", "c 913351863", "w hinojosajorged@~gmail.com", "c 9/22/2025", "L Practicante", "L Xiomara", "L Ing. Civil", "", "", "", "", "", "r 0:00:00", "", "r 0:00:00", "L Pausa"],
  ["c 12", "wl LOAIZA GOMEZ~ANTHONY", "c 973877892", "w loayza~alaniza@autono", "c 9/9/2025", "L Practicante", "L Rubi", "L Ing. Civil", "", "", "", "", "", "r 0:00:00", "", "r 0:00:00", "L Ausente"]
];
// number, name, phone, mail, start, coordinator, career, in, out, total, watch, debt, state
var plain = [
  [13, "LOPEZ HUAYANAY", "973031342", "", "", "Nicolas", "Ing. Civil", "", "", "", "", "", "Presente"],
  [14, "MAMANI CENTENO", "978563821", "leezaar.mc@gmail", "4/16/2025", "Maycol", "Ing. Civil", "", "", "10:00:00", "10:07:36", "-0:07:36", "Presente"],
  [15, "MARQUEZ SILVA", "986834006", "ma.guzman@ce.edu", "4/10/2025", "Nicolas", "Arquitectura", "", "", "0:00:00", "", "0:00:00", "Justificado"],
  [16, "MARTINEZ RODRIGUEZ", "904330254", "martinezrodriguez", "9/4/2025", "Salomon", "Arquitectura", "", "", "0:00:00", "", "0:00:00", "Pausa"],
  [17, "MEDINA ZEGARRA", "945103476", "cmedinazegarra@g", "10/6/2025", "Alexia", "Arquitectura", "2:00 p.m.", "5:00 p.m.", "8:00:00", "4:20:03", "3:39:57", "Presente"],
  [18, "ORE LAURA DAVID", "923761429", "orelaurad@gmail", "2/10/2025", "Claudia", "Ing. Civil", "", "", "15:00:00", "15:08:31", "-0:08:31", "Presente"],
  [19, "PAREDES VARGAS", "938585390", "joseparedesv8@gm", "9/1/2025", "Michael", "Ing. Civil", "2:00 p.m.", "5:25 p.m.", "7:25:00", "6:55:36", "0:29:24", "Presente"],
  [20, "PASTOR QUISPE", "974143096", "maricielo.pastor@", "9/9/2025", "Xiomara", "Arquitectura", "2:00 p.m.", "7:00 p.m.", "6:30:00", "7:34:09", "-1:04:09", "Presente"],
  [21, "PAUCAR GALLEGOS", "933246562", "rosaelvira.pg01@g", "8/4/2025", "Salomon", "Ing. Civil", "", "", "6:00:00", "5:38:54", "0:21:06", "Ausente"],
  [22, "POZO CAPCHA HEIDI", "903000312", "heidialexandrapozo", "8/4/2025", "Michael", "Ing. Civil", "", "", "3:10:00", "4:08:09", "-0:58:09", "Presente"],
  [23, "QUINTANA MENDOZA", "989435072", "davidqm03@gmail", "6/30/2025", "Alexia", "Ing. Civil", "2:00 p.m.", "8:00 p.m.", "11:00:00", "11:04:00", "-0:04:00", "Presente"],
  [24, "RUIZ TARAZONA", "995983133", "alexandraruiz071@", "9/4/2025", "Claudia", "Arquitectura", "2:00 p.m.", "6:00 p.m.", "8:00:00", "8:09:10", "-0:09:10", "Presente"],
  [25, "SOTO URBINA CARO", "983718218", "carolsoto0503@gm", "9/1/2025", "Maycol", "Ing. Civil", "2:00 p.m.", "7:00 p.m.", "10:00:00", "10:42:32", "-0:42:32", "Presente"]
];
plain.forEach(function (p) {
  rows.push(["r " + p[0], "l " + p[1], "r " + p[2], "t " + p[3], "r " + p[4], "t Practicante", "t " + p[5], "t " + p[6],
    "", "", "", "t " + p[7], "t " + p[8], "r " + p[9], "r " + p[10], (p[11][0] === "-" ? "l " : "r ") + p[11], "t " + p[12]]);
});
rows.push(new Array(17).fill(""));

var letters = "ABCDEFGHIJKLMNOP".split("").concat("");
function sel(i) { return i >= 4 && i <= 7 ? "sel " : ""; }
var names = { c: "ctr", l: "lft", t: "lft large", r: "rgt", L: "lft arial", w: "ctr wrap", wl: "lft wrap name" };
function cell(spec, i) {
  var at = spec.indexOf(" "), code = spec.slice(0, at), text = spec.slice(at + 1);
  var low = code.indexOf("_") > 0;
  var cls = sel(i) + (names[code.replace("_", "")] || "") + (low ? " low" : "");
  return '<td class="' + cls + '"><div>' + text.replace("~", "<br>") + "</div></td>";
}
var html = '<colgroup><col class="num">' + letters.map(function () { return "<col>"; }).join("") + "</colgroup>";
html += '<thead><tr><th class="corner"></th>' + letters.map(function (l, i) { return '<th class="' + sel(i) + '">' + l + "</th>"; }).join("") + "</tr></thead>";
function line(r, n) { return "<tr><th>" + n + "</th>" + r.map(cell).join("") + "</tr>"; }
html += '<tbody class="boxed">' + rows.slice(0, 13).map(function (r, i) { return line(r, i + 1); }).join("") + "</tbody>";
html += '<tbody class="plain">' + rows.slice(13).map(function (r, i) { return line(r, i + 14); }).join("") + "</tbody>";
document.getElementById("grid").innerHTML = html;
```
FILE: styles.css
```css
* { box-sizing: border-box; }
html, body { height: 100%; margin: 0; }
body { font-family: Roboto, "Liberation Sans", sans-serif; font-size: 11px; color: #1f1f1f; overflow: hidden; }
button, input, kbd { font: inherit; color: inherit; }
button { border: 0; padding: 0; background: none; display: flex; align-items: center; justify-content: center; white-space: nowrap; }
input { border: 0; padding: 0; background: none; min-width: 0; }
svg { fill: currentColor; flex: none; display: block; }
.sprite { position: absolute; width: 0; height: 0; }
.s6 { width: 6px; height: 6px; }
.s7 { width: 7px; height: 7px; }
.s9 { width: 9px; height: 9px; }
.s11 { width: 11px; height: 11px; }
.s12 { width: 12px; height: 12px; }
.s13 { width: 13px; height: 13px; }
.s14 { width: 14px; height: 14px; }
.s15 { width: 15px; height: 15px; }
.s16 { width: 16px; height: 16px; }
.s17 { width: 17px; height: 17px; }

.screen { position: relative; height: 100vh; display: flex; flex-direction: column; background: #fff; }

/* Browser chrome */
.tabstrip, .chromebar, .bookmarks { font-family: "Open Sans", "Noto Sans", sans-serif; font-size: 9px; }
.tabstrip { height: 32px; flex: none; display: flex; background: #d3e0fb; color: #3c4254; }
.tab-search { width: 22px; height: 22px; margin: 5px 2px 5px 6px; border-radius: 7px; background: #e6eefd; color: #1f2430; }
.tabs { flex: 1; display: flex; min-width: 0; }
.tab { position: relative; flex: 0 1 190px; min-width: 0; display: flex; align-items: center; gap: 6px; padding: 0 11px 0 8px; }
.tab span { flex: 1; min-width: 0; overflow: hidden; white-space: nowrap; -webkit-mask-image: linear-gradient(90deg, #000 90%, transparent); mask-image: linear-gradient(90deg, #000 90%, transparent); }
.tab.active { margin-top: 5px; padding-bottom: 5px; background: #fff; border-radius: 8px 8px 0 0; color: #1f1f1f; }
.tab.active::before, .tab.active::after { content: ""; position: absolute; bottom: 0; width: 8px; height: 8px; }
.tab.active::before { left: -8px; background: radial-gradient(circle at 0 0, transparent 8px, #fff 8px); }
.tab.active::after { right: -8px; background: radial-gradient(circle at 100% 0, transparent 8px, #fff 8px); }
.tab.ruled::before, .newtab::before { content: ""; width: 1px; height: 13px; background: #a9bbe4; }
.tab.ruled { padding-left: 0; gap: 7px; }
.newtab { gap: 8px; }
.winctl { display: flex; gap: 27px; padding-right: 13px; align-items: center; color: #111; }
.winctl svg { width: 10px; height: 10px; fill: none; stroke: currentColor; }
.chromebar { height: 36px; flex: none; display: flex; align-items: center; padding: 0 12px 0 3px; color: #45494f; }
.chromebar .nav { width: 29px; }
.dim { color: #b5b8bd; }
.omnibox { flex: 1; min-width: 0; display: flex; align-items: center; gap: 13px; height: 27px; margin-left: 7px; padding: 0 13px 0 4px; border-radius: 14px; background: #eff1f9; }
.omnibox .site { width: 20px; height: 20px; border-radius: 50%; background: #fff; }
.url { flex: 1; min-width: 0; overflow: hidden; margin-left: -8px; white-space: nowrap; color: #5a5e66; text-decoration: none; font-size: 11px; }
.url b { font-weight: 400; color: #1f1f1f; }
.exts { display: flex; gap: 16px; padding: 0 14px 0 14px; border-right: 1px solid #d8e0f2; }
.profile { height: 27px; gap: 6px; margin-left: 7px; padding: 0 9px 0 8px; border-radius: 14px; background: #d3e2fd; color: #1b2b4b; }
.kebab { margin-left: 12px; }
.bookmarks { height: 29px; flex: none; display: flex; align-items: center; justify-content: space-between; padding: 0 11px 5px 9px; color: #45494f; border-bottom: 1px solid #e3e5e8; }
.allmarks { gap: 6px; padding-left: 12px; border-left: 1px solid #d8dce4; line-height: 15px; }

/* Document header */
.docs { flex: 1; min-height: 0; display: flex; flex-direction: column; background: #f9fbfd; color: #444746; }
.dochead { flex: none; display: flex; height: 47px; padding: 0 17px 0 15px; }
.logo { width: 19px; height: 27px; margin-top: 10px; }
.titles { margin-left: 10px; padding-top: 7px; }
.titlerow { display: flex; align-items: center; gap: 10px; height: 18px; }
h1 { margin: 0; font-size: 13px; font-weight: 400; color: #1f1f1f; line-height: 18px; }
.badge { padding: 0 4px; margin-left: 5px; border-radius: 2px; background: #188038; color: #fff; font-size: 9px; font-weight: 700; line-height: 13px; }
.menubar { display: flex; gap: 10px; height: 14px; padding-left: 1px; }
.headtools { margin-left: auto; display: flex; align-items: center; padding-bottom: 4px; }
.hbtn { width: 36px; }
.cam { gap: 7px; width: 43px; justify-content: flex-end; }
.share { display: flex; height: 28px; margin: 0 13px 0 16px; border-radius: 14px; background: #c2e7ff; color: #001d35; font-weight: 500; overflow: hidden; }
.share button { gap: 5px; padding: 0 6px 0 12px; }
.share .more { width: 24px; padding: 0; border-left: 1px solid #f9fbfd; }
.avatar { width: 22px; height: 22px; margin-left: 15px; }

.workspace { flex: 1; min-height: 0; display: flex; }
.editor { flex: 1; min-width: 0; display: flex; flex-direction: column; background: linear-gradient(#f9fbfd 29px, #fff 29px); }
.toolbar { flex: none; display: flex; align-items: center; height: 29px; padding: 0 5px 0 2px; margin: 0 16px; border-radius: 14px; background: #f0f4f9; }
.menus { display: flex; align-items: center; gap: 7px; width: 70px; height: 22px; margin-right: 2px; padding-left: 6px; border-radius: 11px; background: #fff; }
.menus input { width: 40px; }
.menus input::placeholder { color: #5a5d5c; opacity: 1; }
.tb { width: 23px; height: 22px; flex: none; border-radius: 3px; }
.tb.wide { width: 31px; gap: 3px; }
.tb.step { width: 21px; }
.tb.combo { justify-content: space-between; padding: 0 4px; margin: 0 2px 0 4px; }
.tb.zoom { width: 50px; }
.tb.font { width: 61px; margin: 0 3px 0 7px; }
.tb.sm { font-size: 10px; }
.tb.dec { width: 24px; flex-direction: column; font-size: 10px; font-weight: 500; line-height: 9px; }
.dec small { font-size: 8px; line-height: 4px; align-self: flex-end; }
.tb.on { background: #d3e3fd; color: #041e49; font-size: 12px; }
.tb.ital { font-family: "Liberation Serif", serif; font-size: 14px; font-weight: 700; }
.rule { flex: none; width: 1px; height: 14px; margin: 0 2px; background: #c7cad0; }
.size { width: 25px; height: 16px; flex: none; border: 1px solid #747775; border-radius: 3px; text-align: center; }
.collapse { margin-left: auto; }
.formula { flex: none; display: flex; align-items: center; height: 26px; padding-top: 3px; border-bottom: 1px solid #c9cccf; font-size: 9px; }
.namebox { width: 69px; padding-left: 10px; justify-content: space-between; color: #1f1f1f; }
.fx { margin: 0 6px 0 17px; font-family: "Liberation Serif", serif; font-size: 12px; line-height: 14px; color: #777; }
.formula input { flex: 1; color: #1f1f1f; }

/* Spreadsheet grid */
.gridwrap { flex: 1; min-height: 0; display: flex; }
.gridview { flex: 1; min-width: 0; overflow: hidden; }
.grid { width: 1270px; table-layout: fixed; border-collapse: separate; border-spacing: 0; font-family: Lato, sans-serif; font-size: 9px; line-height: 11px; color: #111; }
.grid col.num { width: 33px; }
.grid th, .grid td { padding: 0; overflow: hidden; white-space: nowrap; }
.grid thead th { height: 18px; padding-top: 2px; border-right: 1px solid #c7c9cb; border-bottom: 1px solid #c7c9cb; font-family: Roboto, sans-serif; font-weight: 400; color: #575b5f; background: #fff; }
.grid thead th.sel { background: #0b57d0; border-color: #0b57d0 #6b9be6 #0b57d0 #0b57d0; color: #fff; font-weight: 700; }
.grid thead .corner { border-right: 3px solid #b9bbbd; border-bottom: 3px solid #b9bbbd; background: #f8f9fa; }
.grid tbody th { background: #d3e3fd; border-right: 1px solid #b9c9e6; border-bottom: 1px solid #b9c9e6; font-family: "Liberation Sans", sans-serif; font-size: 8px; color: #123a7a; }
.boxed tr { height: 18px; }
.boxed tr:nth-child(3n + 1) { height: 19px; }
.plain tr { height: 14px; }
.plain tr:nth-child(5n + 1), .plain tr:nth-child(5n + 3) { height: 15px; }
.boxed td { border-right: 2px solid #1a1a1a; border-bottom: 2px solid #1a1a1a; }
.plain td { border-right: 1px solid #e1e3e6; border-bottom: 1px solid #e1e3e6; }
.grid td div { padding-top: 1px; }
.grid td.sel { background: #e7eefb; color: #18233c; }
.plain td.sel { border-color: #cfd9ea; }
.plain td:nth-child(5) { border-right-color: #2a66c8; }
.boxed tr:first-child td { font-size: 8px; font-weight: 700; }
.ctr { text-align: center; }
.grid .lft div { padding-left: 2px; }
.grid .large { font-size: 10px; }
.rgt { text-align: right; }
.rgt div { padding-right: 1px; }
.grid .arial { font-family: "Liberation Sans", sans-serif; font-size: 10px; }
.low { vertical-align: bottom; }
.low div { line-height: 10px; }
.wrap { vertical-align: top; }
.grid .wrap div { height: 16px; padding-top: 2px; line-height: 10px; overflow: hidden; }
.grid .name { font-size: 8px; }
.vscroll { flex: none; width: 8px; padding-top: 19px; display: flex; flex-direction: column; background: #f9fbfd; font-size: 6px; color: #999; text-align: center; }
.vscroll i { height: 17px; margin-bottom: auto; border-radius: 4px; background: #d5d7da; }
.vscroll span { height: 10px; line-height: 10px; }
.hscroll { flex: none; display: flex; align-items: center; gap: 4px; height: 9px; padding: 0 14px 0 35px; border-top: 1px solid #e1e3e6; font-size: 6px; color: #999; }
.hscroll i { width: 256px; height: 7px; margin-right: auto; border-radius: 4px; background: #dadce0; }
.side { flex: none; width: 40px; display: flex; flex-direction: column; align-items: center; background: #f9fbfd; color: #1f1f1f; }
.side button { flex: none; height: 40px; margin: -5px 0 5px; }
.siderule { width: 19px; height: 1px; margin: 8px 0 17px; background: #d9dcdf; }
.side .sidelast { margin: auto 0 -26px; color: #444746; }
.sheetbar { flex: none; display: flex; align-items: center; height: 26px; padding: 0 50px 0 30px; border-top: 1px solid #e6e9ec; }
.sq { width: 29px; }
.sheets { display: flex; height: 100%; margin-left: 8px; }
.sheets button { gap: 7px; padding: 0 9px; }
.sheets .current { padding: 0 10px; background: #dfe8f7; color: #0b57d0; font-weight: 700; }
.calc { margin-left: auto; height: 21px; gap: 6px; padding: 0 7px; border-radius: 4px; background: #c4eed0; color: #0a3818; font-size: 10px; font-weight: 500; }

/* Context menu */
.ctx { position: absolute; top: 156px; bottom: 32px; left: 578px; width: 232px; display: flex; flex-direction: column; justify-content: space-between; padding: 5px 0; background: #fff; box-shadow: 0 1px 4px rgba(0, 0, 0, .35); color: #3c4043; font-size: 10px; }
.ctx button { width: 100%; height: 23px; padding: 0 11px 0 10px; gap: 6px; justify-content: flex-start; }
.ctx .hover { background: #f0f1f2; }
.ctx kbd { margin-left: auto; }
.ctx .arrow { width: 6px; height: 6px; margin-left: auto; color: #777; }
.ctx .arrow.dark { color: #111; }
.ctx .small { padding: 1px; }
.ctx hr { width: 100%; height: 1px; margin: 6px 0 5px; border: 0; background: #dadce0; }
.pointer { position: absolute; left: 600px; top: 252px; width: 14px; height: 19px; }

/* Taskbar */
.taskbar { flex: none; display: flex; height: 32px; background: linear-gradient(90deg, #22353f, #1f3143 50%, #1a2844); color: #fff; }
.apps { display: flex; padding-left: 2px; }
.apps button { width: 39px; border-bottom: 2px solid transparent; }
.apps svg { width: 19px; height: 19px; }
.apps .run { border-bottom-color: #6fb2e6; }
.apps .front { background: #4b5a66; }
.zoomapp span { width: 19px; height: 19px; border-radius: 6px; background: #0b5cff; font-size: 10px; font-weight: 700; line-height: 18px; }
.tray { margin-left: auto; display: flex; align-items: center; padding-right: 16px; font-family: "Open Sans", sans-serif; font-size: 9px; }
.tray button { width: 19px; }
.tray svg { width: 13px; height: 13px; fill: none; stroke: #fff; stroke-width: 1.8; }
.lang { margin: 0 11px 0 7px; }
.tray time { display: flex; flex-direction: column; align-items: center; line-height: 14px; }
.tray .notes { margin-left: 12px; }
.notes svg { stroke: none; }
```
